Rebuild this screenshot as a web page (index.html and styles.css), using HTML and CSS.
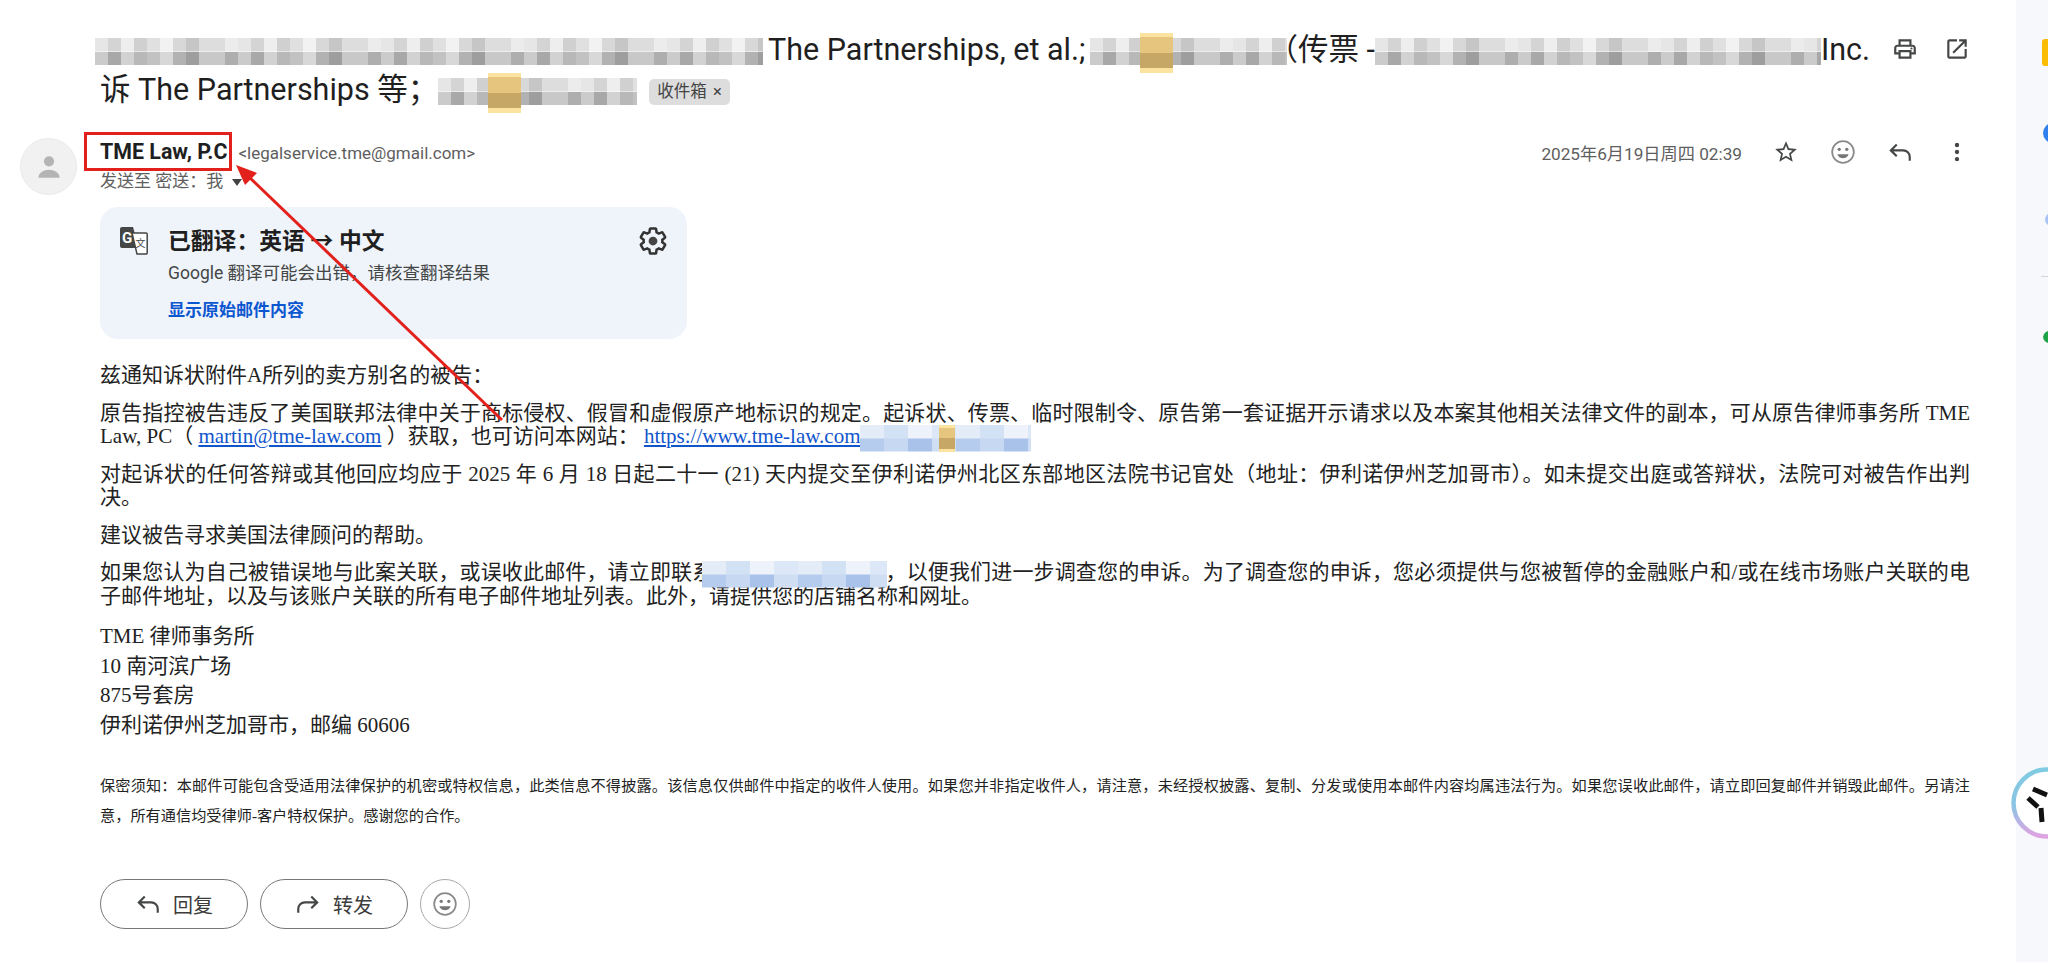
FILE: index.html
```html
<!DOCTYPE html>
<html lang="zh-CN">
  <head>
    <meta charset="UTF-8" />
    <title>Gmail</title>
    <link rel="stylesheet" href="styles.css">
  </head>
  <body>
    <main class="mail">
      <div class="subject-row">
        <h1 class="subject">
          <span class="mosaic s-a"></span>The Partnerships, et al.;<span class="mosaic s-b"><i class="mosaic-hl"></i></span>&#xFF08;传票 -<span class="mosaic s-c"></span>Inc.<br />诉 The Partnerships 等&#xFF1B;<span class="mosaic s-d"><i class="mosaic-hl"></i></span><span class="chip">收件箱 <b>×</b></span>
        </h1>
        <div class="subject-icons">
          <svg class="icon" viewBox="0 0 24 24"><path d="M19 8h-1V3H6v5H5c-1.66 0-3 1.34-3 3v6h4v4h12v-4h4v-6c0-1.66-1.34-3-3-3zM8 5h8v3H8V5zm8 12v2H8v-4h8v2zm2-2v-2H6v2H4v-4c0-.55.45-1 1-1h14c.55 0 1 .45 1 1v4h-2z"/><circle cx="18" cy="11.5" r="1"/></svg>
          <svg class="icon" viewBox="0 0 24 24"><path d="M19 19H5V5h7V3H5c-1.11 0-2 .9-2 2v14c0 1.1.89 2 2 2h14c1.1 0 2-.9 2-2v-7h-2v7zM14 3v2h3.59l-9.83 9.83 1.41 1.41L19 6.41V10h2V3h-7z"/></svg>
        </div>
      </div>

      <div class="sender-row">
        <div class="avatar">
          <svg viewBox="0 0 24 24"><circle cx="12" cy="8" r="3.6"/><path d="M4.5 19.5c0-3.6 4-5.6 7.5-5.6s7.5 2 7.5 5.6z"/></svg>
        </div>
        <div class="sender-info">
          <div class="sender-line"><strong>TME Law, P.C</strong><span class="sender-mail">&lt;legalservice.tme@gmail.com&gt;</span></div>
          <div class="to-line">发送至 密送&#xFF1A;我 <span class="caret"></span></div>
        </div>
        <div class="sender-actions">
          <span class="date">2025年6月19日周四 02:39</span>
          <svg class="icon" viewBox="0 0 24 24"><path d="M22 9.24l-7.19-.62L12 2 9.19 8.63 2 9.24l5.46 4.73L5.82 21 12 17.27 18.18 21l-1.63-7.03L22 9.24zM12 15.4l-3.76 2.27 1-4.28-3.32-2.88 4.38-.38L12 6.1l1.71 4.04 4.38.38-3.32 2.88 1 4.28L12 15.4z"/></svg>
          <svg class="icon smile" viewBox="0 0 24 24"><circle cx="12" cy="12" r="10"/><circle class="dot" cx="8.5" cy="9.5" r="1.5"/><circle class="dot" cx="15.5" cy="9.5" r="1.5"/><path class="dot" d="M6.8 14h10.4c-.7 2.3-2.8 3.8-5.2 3.8S7.500 16.300 6.800 14z"/></svg>
          <svg class="icon reply" viewBox="0 0 24 24"><path d="M9 5 3.500 10.500 9 16M3.500 10.500H15a6 6 0 0 1 6 6V20"/></svg>
          <svg class="icon" viewBox="0 0 24 24"><circle cx="12" cy="5.500" r="2"/><circle cx="12" cy="12" r="2"/><circle cx="12" cy="18.500" r="2"/></svg>
        </div>
      </div>

      <section class="translate-card">
        <svg class="translate-logo" viewBox="0 0 28 28">
          <path class="tile-back" d="M2 0h11l6 21H2a2 2 0 0 1-2-2V2a2 2 0 0 1 2-2z"/>
          <path class="tile-front" d="M12 6h14a1.200 1.200 0 0 1 1.200 1.200v18.600A1.200 1.200 0 0 1 26 27h-9z"/>
          <text class="tile-g" x="2" y="16">G</text>
          <text class="tile-x" x="15.500" y="20">文</text>
        </svg>
        <div class="translate-text">
          <div class="translate-title">已翻译&#xFF1A;英语 → 中文</div>
          <div class="translate-note">Google 翻译可能会出错&#xFF0C;请核查翻译结果</div>
          <a class="translate-link">显示原始邮件内容</a>
        </div>
        <svg class="gear" viewBox="0 0 24 24"><path d="M19.430 12.980c.04-.32.07-.64.07-.98s-.03-.66-.07-.98l2.110-1.650c.19-.15.24-.42.12-.64l-2-3.460c-.12-.22-.39-.3-.61-.22l-2.490 1c-.52-.4-1.080-.73-1.690-.98l-.38-2.650C14.460 2.180 14.250 2 14 2h-4c-.25 0-.46.18-.49.42l-.38 2.650c-.61.25-1.170.59-1.690.98l-2.490-1c-.23-.09-.49 0-.61.22l-2 3.460c-.13.22-.07.49.12.64l2.110 1.650c-.04.32-.07.65-.07.98s.03.66.07.98l-2.110 1.650c-.19.15-.24.42-.12.64l2 3.460c.12.22.39.3.61.22l2.490-1c.52.4 1.080.73 1.690.98l.38 2.650c.03.24.24.42.49.42h4c.25 0 .46-.18.49-.42l.38-2.650c.61-.25 1.170-.59 1.690-.98l2.490 1c.23.09.49 0 .61-.22l2-3.460c.12-.22.07-.49-.12-.64l-2.110-1.650z"/><circle cx="12" cy="12" r="3.500"/></svg>
      </section>

      <article class="body">
        <p>兹通知诉状附件A所列的卖方别名的被告&#xFF1A;</p>
        <p>原告指控被告违反了美国联邦法律中关于商标侵权、假冒和虚假原产地标识的规定。起诉状、传票、临时限制令、原告第一套证据开示请求以及本案其他相关法律文件的副本&#xFF0C;可从原告律师事务所 TME Law, PC&#xFF08; <a>martin@tme-law.com</a> &#xFF09;获取&#xFF0C;也可访问本网站&#xFF1A; <a>https://www.tme-law.com</a><span class="mosaic blue b-a"><i class="mosaic-hl"></i></span></p>
        <p>对起诉状的任何答辩或其他回应均应于 2025 年 6 月 18 日起二十一 (21) 天内提交至伊利诺伊州北区东部地区法院书记官处&#xFF08;地址&#xFF1A;伊利诺伊州芝加哥市&#xFF09;。如未提交出庭或答辩状&#xFF0C;法院可对被告作出判决。</p>
        <p>建议被告寻求美国法律顾问的帮助。</p>
        <p>如果您认为自己被错误地与此案关联&#xFF0C;或误收此邮件&#xFF0C;请立即联系<span class="mosaic blue b-b"></span>&#xFF0C;以便我们进一步调查您的申诉。为了调查您的申诉&#xFF0C;您必须提供与您被暂停的金融账户和/或在线市场账户关联的电子邮件地址&#xFF0C;以及与该账户关联的所有电子邮件地址列表。此外&#xFF0C;请提供您的店铺名称和网址。</p>
        <address class="address">TME 律师事务所<br />10 南河滨广场<br />875号套房<br />伊利诺伊州芝加哥市&#xFF0C;邮编 60606</address>
        <p class="notice">保密须知&#xFF1A;本邮件可能包含受适用法律保护的机密或特权信息&#xFF0C;此类信息不得披露。该信息仅供邮件中指定的收件人使用。如果您并非指定收件人&#xFF0C;请注意&#xFF0C;未经授权披露、复制、分发或使用本邮件内容均属违法行为。如果您误收此邮件&#xFF0C;请立即回复邮件并销毁此邮件。另请注意&#xFF0C;所有通信均受律师-客户特权保护。感谢您的合作。</p>
      </article>

      <div class="reply-buttons">
        <button class="pill"><svg class="icon reply" viewBox="0 0 24 24"><path d="M9 5 3.500 10.500 9 16M3.500 10.500H15a6 6 0 0 1 6 6V20"/></svg>回复</button>
        <button class="pill"><svg class="icon reply flip" viewBox="0 0 24 24"><path d="M9 5 3.500 10.500 9 16M3.500 10.500H15a6 6 0 0 1 6 6V20"/></svg>转发</button>
        <button class="pill-round"><svg class="icon smile" viewBox="0 0 24 24"><circle cx="12" cy="12" r="10"/><circle class="dot" cx="8.5" cy="9.5" r="1.5"/><circle class="dot" cx="15.5" cy="9.5" r="1.5"/><path class="dot" d="M6.8 14h10.4c-.7 2.3-2.8 3.8-5.2 3.8S7.500 16.300 6.800 14z"/></svg></button>
      </div>
    </main>

    <aside class="side">
      <span class="side-tab"></span>
      <span class="side-dot blue-dot"></span>
      <span class="side-dot pale-dot"></span>
      <span class="side-rule"></span>
      <span class="side-dot green-dot"></span>
    </aside>

    <!-- annotation drawn over the screenshot -->
    <div class="mark-box"></div>
    <svg class="mark-arrow" viewBox="0 0 2048 962">
      <path d="M502 420 247 175" />
      <path class="head" d="M236 165 257 173 245 185z" />
    </svg>

    <svg class="assistant" viewBox="0 0 72 72">
      <defs>
        <linearGradient id="ring" x1="0" y1="0" x2="0" y2="1">
          <stop offset="0" stop-color="#7fcbe2" />
          <stop offset="0.55" stop-color="#8cc4e4" />
          <stop offset="1" stop-color="#e0a3e2" />
        </linearGradient>
      </defs>
      <circle class="ring" cx="36" cy="36" r="33.500" stroke="url(#ring)" />
      <path class="glyph" d="M22 22 36 28M17 31 27 40M30 41 31 55" />
    </svg>
  </body>
</html>
```

FILE: styles.css
```css
html, body {
  margin: 0;
  padding: 0;
  height: 100%;
}

body {
  display: flex;
  position: relative;
  overflow: hidden;
  background: #fff;
  color: #222;
  font-family: Roboto, "Noto Sans CJK SC", sans-serif;
}

.mail {
  flex: 1;
  min-width: 0;
  padding: 30px 46px 0 20px;
}

.icon {
  width: 26px;
  height: 26px;
  fill: #444746;
  flex: none;
}

.icon.reply {
  fill: none;
  stroke: #444746;
  stroke-width: 2;
}

.icon.flip {
  transform: scaleX(-1);
}

.icon.smile {
  fill: none;
  stroke: #8a8a8a;
  stroke-width: 1.6;
}

.icon.smile .dot {
  fill: #777;
  stroke: none;
}

/* subject */
.subject-row {
  display: flex;
  justify-content: space-between;
  padding-left: 80px;
}

.subject {
  margin: 0;
  font-size: 30.5px;
  font-weight: 400;
  line-height: 40px;
  color: #1f1f1f;
  white-space: nowrap;
}

.subject-icons {
  display: flex;
  gap: 26px;
  height: 40px;
  margin-top: 6px;
}

.chip {
  display: inline-block;
  margin-left: 12px;
  padding: 0 8px;
  height: 26px;
  line-height: 26px;
  font-size: 16.5px;
  vertical-align: middle;
  color: #444;
  background: #ddd;
  border-radius: 5px;
}

.chip b {
  font-weight: 400;
  margin-left: 2px;
}

/* pixelated patches */
.mosaic {
  display: inline-block;
  position: relative;
  vertical-align: middle;
  height: 27px;
  margin-top: -4px;
  margin-bottom: -4px;
  filter: blur(0.7px);
  background:
    repeating-linear-gradient(90deg, #e6e6e6 0 13px, #d4d4d4 13px 26px, #eee 26px 39px, #d0d0d0 39px 52px, #e0e0e0 52px 65px, #f2f2f2 65px 78px, #d8d8d8 78px 91px, #c6c6c6 91px 104px, #ddd 104px 130px, #ececec 130px 143px) top / 100% 50% no-repeat,
    repeating-linear-gradient(90deg, #cbcbcb 0 13px, #a8a8a8 13px 26px, #d2d2d2 26px 39px, #b8b8b8 39px 52px, #c2c2c2 52px 65px, #d8d8d8 65px 78px, #b2b2b2 78px 91px, #9e9e9e 91px 104px, #c8c8c8 104px 130px, #aeaeae 130px 143px) bottom / 100% 50% no-repeat;
}

.mosaic.blue {
  background:
    repeating-linear-gradient(90deg, #e4ecf8 0 24px, #d3e1f5 24px 48px, #eef3fb 48px 72px, #dce7f7 72px 96px) top / 100% 50% no-repeat,
    repeating-linear-gradient(90deg, #b6ccee 0 24px, #c7d8f2 24px 48px, #a8c2ea 48px 72px, #d0def3 72px 96px) bottom / 100% 50% no-repeat;
}

.mosaic-hl {
  position: absolute;
  top: -5px;
  bottom: -8px;
  left: 50px;
  width: 33px;
  background: linear-gradient(#fde3a0 0 10%, #e6c67e 10% 50%, #c7a765 50% 88%, #fde3a0 88%);
}

.s-a { width: 668px; margin-left: -5px; margin-right: 5px; }
.s-b { width: 197px; margin-left: 5px; margin-right: -20px; }
.s-c { width: 446px; }
.s-d { width: 199px; margin-left: 0; }

.b-a {
  width: 171px;
}

.b-a .mosaic-hl {
  top: 0;
  bottom: 0;
  left: 79px;
  width: 16px;
}

.b-b {
  width: 185px;
  margin-left: -11px;
  margin-right: -2px;
}

/* sender */
.sender-row {
  display: flex;
  align-items: flex-start;
  margin-top: 28px;
}

.avatar {
  flex: none;
  width: 55px;
  height: 55px;
  margin-right: 23px;
  display: flex;
  align-items: center;
  justify-content: center;
  background: #f1f1f1;
  border: 1px solid #eaeaea;
  border-radius: 50%;
}

.avatar svg {
  width: 34px;
  height: 34px;
  fill: #b4b4b4;
}

.sender-info {
  flex: 1;
  padding-top: 1px;
}

.sender-line {
  height: 26px;
  line-height: 26px;
  font-size: 21.4px;
  color: #1f1f1f;
}

.sender-line strong {
  font-weight: 700;
}

.sender-mail {
  margin-left: 11px;
  font-size: 17px;
  color: #5e5e5e;
}

.to-line {
  margin-top: 4px;
  font-size: 17px;
  line-height: 24px;
  color: #5e5e5e;
}

.caret {
  display: inline-block;
  margin-left: 5px;
  vertical-align: middle;
  border: 5px solid transparent;
  border-top: 7px solid #444;
  border-bottom: 0;
}

.sender-actions {
  display: flex;
  align-items: center;
  gap: 31px;
  height: 28px;
}

.date {
  font-size: 17.2px;
  color: #5e5e5e;
}

/* translate box */
.translate-card {
  display: flex;
  width: 587px;
  height: 132px;
  box-sizing: border-box;
  margin: 12px 0 0 80px;
  padding: 20px;
  background: #eff3fa;
  border-radius: 18px;
}

.translate-logo {
  flex: none;
  width: 28px;
  height: 28px;
}

.tile-back { fill: #444746; }
.tile-front { fill: #fff; stroke: #444746; stroke-width: 1.500; }

.tile-g {
  font-size: 15px;
  font-weight: 700;
  fill: #fff;
}

.tile-x {
  font-size: 10px;
  fill: #444746;
}

.translate-text {
  flex: 1;
  margin-left: 20px;
}

.translate-title {
  font-size: 22.8px;
  font-weight: 700;
  line-height: 30px;
  color: #1f1f1f;
}

.translate-note {
  margin-top: 4px;
  font-size: 17.5px;
  line-height: 24px;
  color: #444746;
}

.translate-link {
  display: block;
  margin-top: 13px;
  font-size: 17px;
  font-weight: 700;
  line-height: 24px;
  color: #0b57d0;
}

.gear {
  flex: none;
  width: 30px;
  height: 30px;
  margin: -1px -1px 0 0;
  fill: none;
  stroke: #333;
  stroke-width: 2;
}

.gear circle {
  fill: #444;
  stroke: none;
}

/* message */
.body {
  margin: 25px 0 0 80px;
  font-family: "Liberation Serif", "Noto Sans CJK SC", serif;
  font-size: 21px;
  line-height: 23.500px;
  color: #222;
  text-align: justify;
}

.body p {
  margin: 0 0 14px;
}

.body a {
  color: #15c;
  text-decoration: underline;
}

.address {
  font-style: normal;
  line-height: 29.500px;
  text-align: left;
}

.body .notice {
  margin: 31px 0 0;
  font-size: 15.2px;
  line-height: 30px;
}

.reply-buttons {
  display: flex;
  gap: 12px;
  margin: 48px 0 0 80px;
}

.pill, .pill-round {
  display: flex;
  align-items: center;
  justify-content: center;
  height: 50px;
  padding: 0;
  background: #fff;
  border: 1px solid #747775;
  border-radius: 25px;
}

.pill {
  width: 148px;
  gap: 12px;
  font-family: Roboto, "Noto Sans CJK SC", sans-serif;
  font-size: 20px;
  color: #3c3c3c;
}

.pill-round {
  width: 50px;
  border-color: #a8a8a8;
}

/* right rail */
.side {
  flex: none;
  width: 32px;
  display: flex;
  flex-direction: column;
  overflow: hidden;
  background: #f6f8fc;
}

.side-tab {
  width: 8px;
  height: 27px;
  margin: 39px 0 0 26px;
  background: #fbbc04;
  border-radius: 3px;
}

.side-dot {
  width: 20px;
  height: 20px;
  border-radius: 50%;
}

.blue-dot {
  margin: 57px 0 0 27px;
  background: #2f7fed;
}

.pale-dot {
  margin: 70px 0 0 29px;
  background: #a9c4f4;
  height: 13px;
  width: 13px;
}

.side-rule {
  width: 8px;
  height: 1px;
  margin: 50px 0 0 25px;
  background: #d0d3d8;
}

.green-dot {
  margin: 53px 0 0 27px;
  height: 14px;
  background: #1ea446;
}

/* annotation */
.mark-box {
  position: absolute;
  left: 84px;
  top: 132px;
  width: 142px;
  height: 33px;
  border: 3px solid #e3211c;
}

.mark-arrow {
  position: absolute;
  inset: 0;
  width: 100%;
  height: 100%;
  pointer-events: none;
}

.mark-arrow path {
  fill: none;
  stroke: #e3211c;
  stroke-width: 3;
}

.mark-arrow .head {
  fill: #e3211c;
  stroke: none;
}

.assistant {
  position: absolute;
  left: 2011px;
  top: 767px;
  width: 72px;
  height: 72px;
}

.ring {
  fill: #fff;
  stroke-width: 4.500;
}

.glyph {
  fill: none;
  stroke: #111;
  stroke-width: 5;
}
```
